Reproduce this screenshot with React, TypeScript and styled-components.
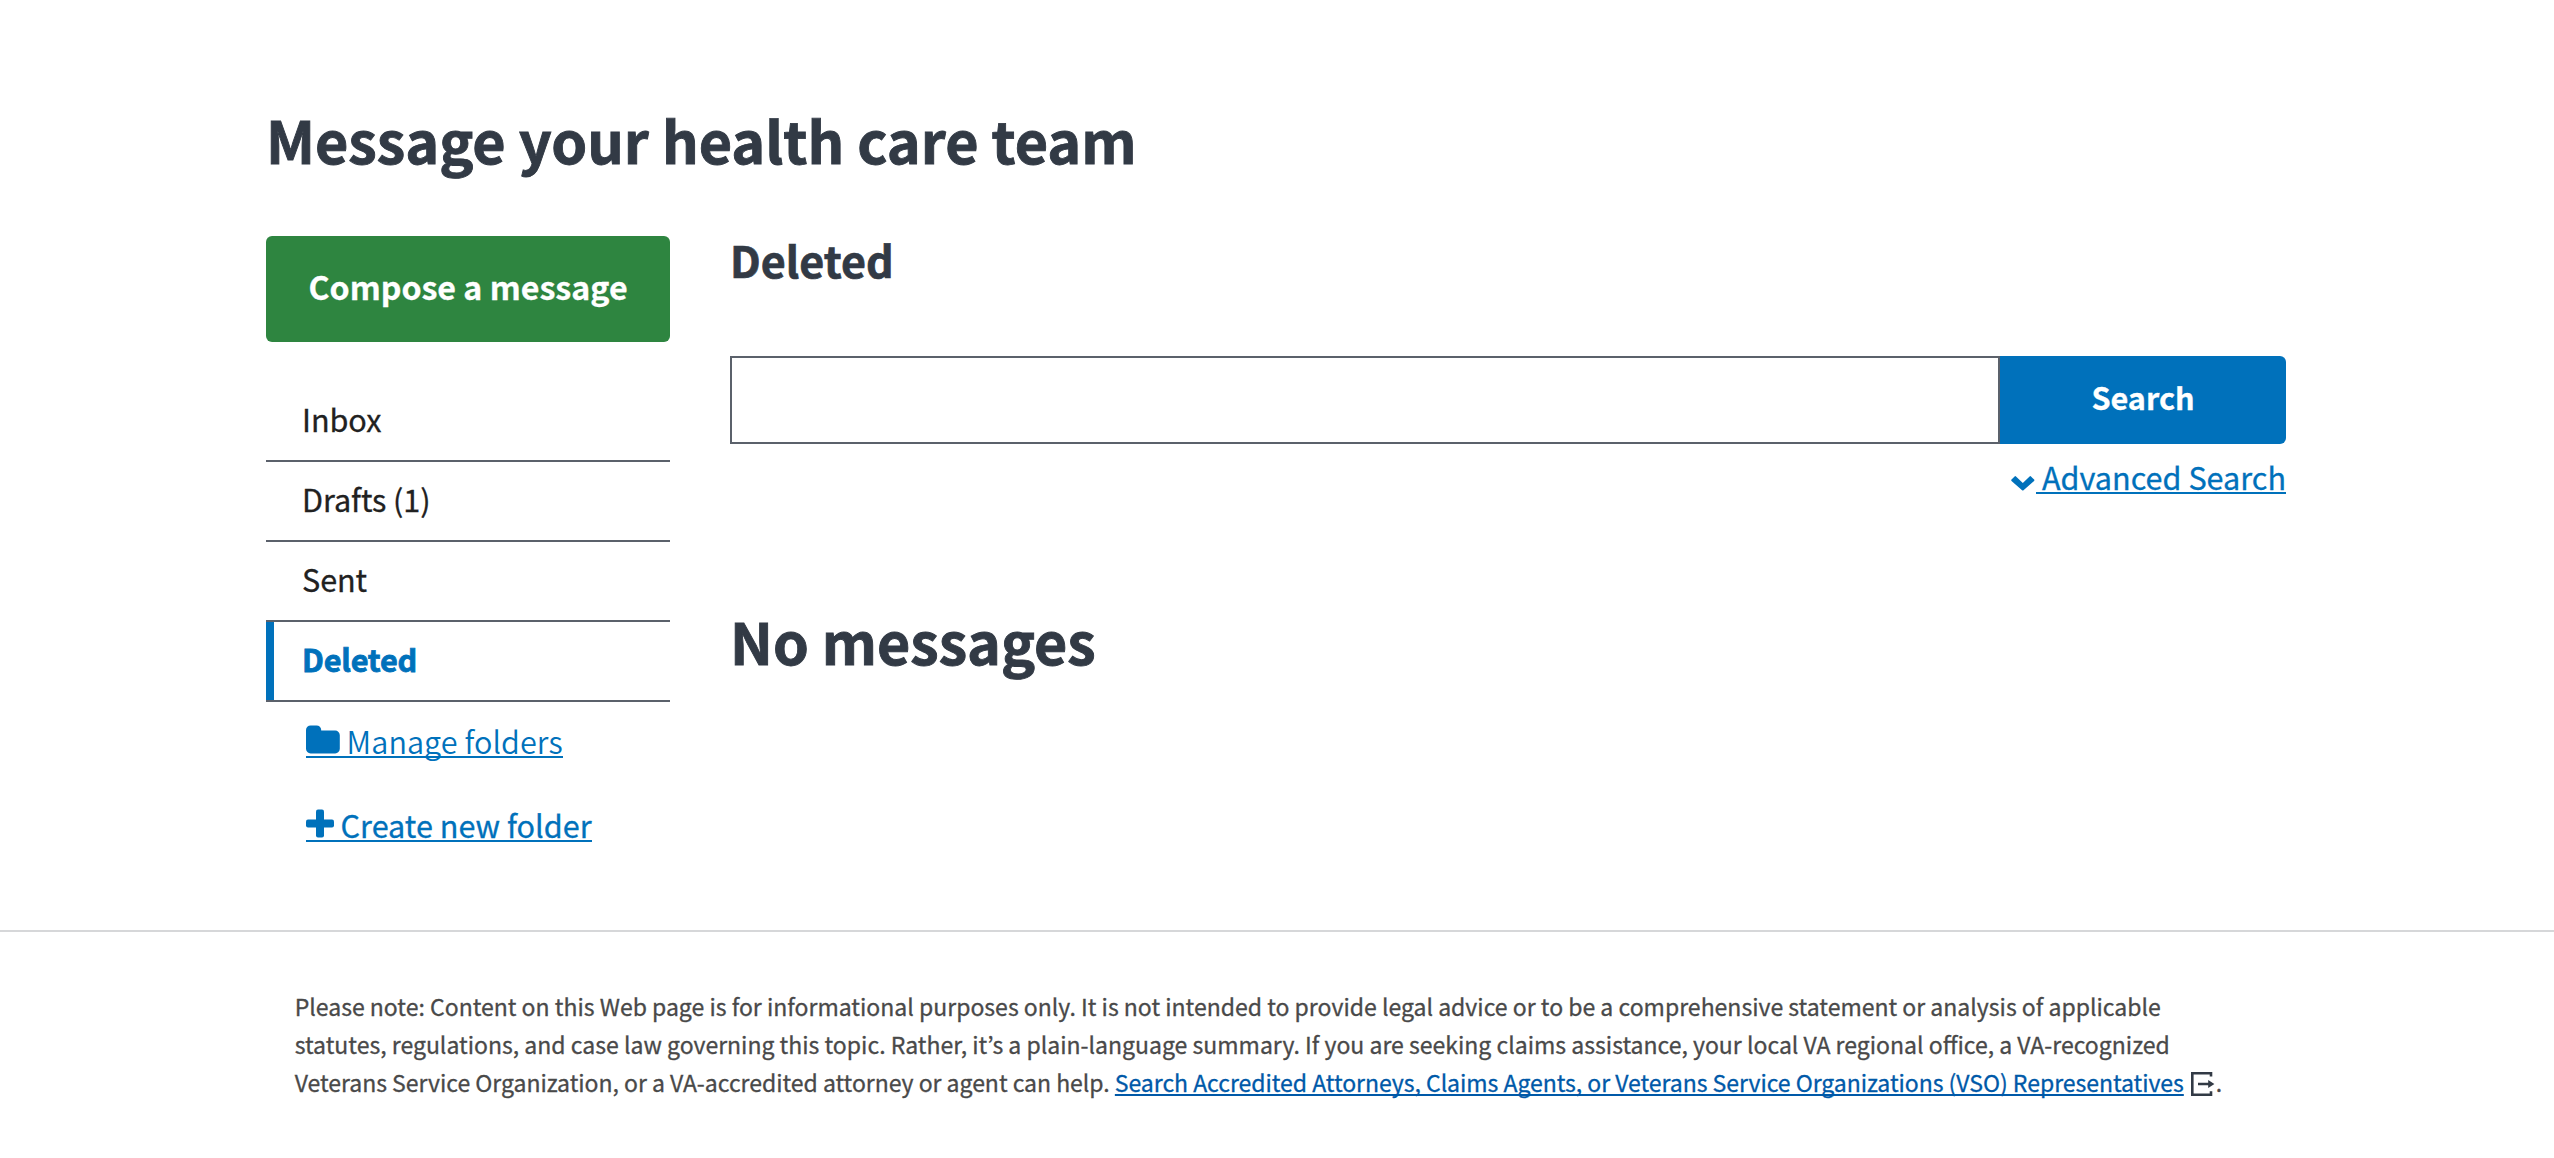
import React from "react";
import styled, { createGlobalStyle } from "styled-components";

const blue = "#0071bb";
const ink = "#323a45";
const rule = "#5b616b";

const Global = createGlobalStyle`
  *, *::before, *::after { box-sizing: border-box; }
  body {
    margin: 0;
    background: #fff;
    color: #212121;
    font-family: "Noto Sans CJK KR", "Noto Sans", sans-serif;
    font-size: 30.6px;
    overflow: hidden;
    -webkit-text-stroke: 0.3px currentColor;
  }
  h1, h2, ul, p { margin: 0; padding: 0; }
  a { color: ${blue}; text-decoration: none; }
`;

const Page = styled.div`
  display: flex;
  flex-direction: column;
  height: 1158px;
`;

const Content = styled.main`
  display: flex;
  flex-direction: column;
  gap: 57px;
  height: 930px;
  padding: 99px 268px 0 266px;
`;

const Title = styled.h1`
  color: ${ink};
  font-size: 57.45px;
  font-weight: 700;
  line-height: 80px;
  -webkit-text-stroke-width: 0.9px;
`;

const Columns = styled.div`
  display: flex;
  gap: 60px;
`;

const Sidebar = styled.aside`
  display: flex;
  flex-direction: column;
  width: 404px;
`;

const Panel = styled.section`
  display: flex;
  flex-direction: column;
  flex: 1;
`;

const Button = styled.button`
  border: 0;
  padding: 0 0 6px;
  color: #fff;
  font-family: inherit;
  font-weight: 700;
`;

const ComposeButton = styled(Button)`
  height: 106px;
  border-radius: 6px;
  background: #2e8540;
  font-size: 32.2px;
`;

const FolderList = styled.ul`
  margin-top: 40px;
  list-style: none;
`;

const FolderItem = styled.li<{ $active?: boolean }>`
  border-bottom: 2px solid ${rule};

  a {
    display: flex;
    align-items: center;
    height: 78px;
    padding: 0 0 5px ${(p) => (p.$active ? 28 : 36)}px;
    border-left: ${(p) => (p.$active ? `8px solid ${blue}` : "0")};
    color: ${(p) => (p.$active ? blue : "#212121")};
    font-weight: ${(p) => (p.$active ? 700 : 400)};
    letter-spacing: ${(p) => (p.$active ? "-0.2px" : "-0.08px")};
    -webkit-text-stroke-width: ${(p) => (p.$active ? 0.8 : 0.3)}px;
  }
`;

const FolderActions = styled.div`
  display: flex;
  flex-direction: column;
  align-items: flex-start;
  gap: 51px;
  padding: 23px 0 0 40px;
`;

const ActionLink = styled.a<{ $light?: boolean; $gap: number }>`
  display: flex;
  align-items: flex-end;
  gap: ${(p) => p.$gap}px;
  height: 33px;
  border-bottom: 2px solid ${blue};
  font-weight: ${(p) => (p.$light ? 350 : 400)};
  letter-spacing: ${(p) => (p.$light ? "0.07px" : "0")};
  -webkit-text-stroke-width: ${(p) => (p.$light ? 0 : 0.3)}px;
  line-height: 29px;
  white-space: nowrap;

  svg { margin-bottom: 2px; }
`;

const FolderTitle = styled.h2`
  color: ${ink};
  font-size: 43px;
  font-weight: 700;
  line-height: 46px;
  -webkit-text-stroke-width: 0.7px;
`;

const SearchBar = styled.form`
  display: flex;
  height: 88px;
  margin-top: 74px;
`;

const SearchInput = styled.input`
  flex: 1;
  border: 2px solid ${rule};
  border-radius: 0;
  padding: 0 20px;
  outline: 0;
  font: inherit;
`;

const SearchButton = styled(Button)`
  width: 286px;
  border-radius: 0 6px 6px 0;
  background: ${blue};
  font-size: 30.6px;
`;

const AdvancedLink = styled.a`
  display: flex;
  align-items: flex-end;
  align-self: flex-end;
  gap: 1px;
  margin-top: 17px;

  svg { margin-bottom: 3px; }
`;

const AdvancedLabel = styled.span`
  height: 33px;
  padding-left: 6px;
  border-bottom: 2px solid ${blue};
  line-height: 33px;
`;

const EmptyState = styled(Title)`
  margin-top: 107px;
  font-size: 57.3px;
`;

const Footer = styled.footer`
  padding: 55px 294px 0 294.7px;
  border-top: 2px solid #d6d7d9;
`;

const Disclaimer = styled.p`
  color: #494949;
  font-size: 23.02px;
  line-height: 38px;
  white-space: nowrap;
`;

const Tracked = styled.span<{ $ls: number }>`
  letter-spacing: ${(p) => p.$ls}px;
`;

const FooterLink = styled.a`
  color: #0059a8;
  letter-spacing: -0.04px;
  text-decoration: underline;
  text-decoration-thickness: 2px;
  text-decoration-skip-ink: none;
  text-underline-offset: 2px;
`;

const ExitMark = styled.svg`
  margin: 0 1px 0 7px;
  vertical-align: -4px;
`;

const FolderIcon = () => (
  <svg width="34" height="29" viewBox="0 0 34 29" fill={blue}>
    <path d="M0 5a4.6 4.6 0 0 1 4.6-4.6h6a4.6 4.6 0 0 1 4.6 4.6v.6h14a4.6 4.6 0 0 1 4.6 4.6v13.6a4.6 4.6 0 0 1-4.6 4.6H4.6A4.6 4.6 0 0 1 0 23.8z" />
  </svg>
);

const PlusIcon = () => (
  <svg width="28" height="29" viewBox="0 0 28 29" fill={blue}>
    <rect x="10" y="0.6" width="8" height="28" rx="2" />
    <rect x="0" y="10.6" width="28" height="8" rx="2" />
  </svg>
);

const ChevronIcon = () => (
  <svg width="24" height="16" viewBox="0 0 24 16" fill={blue}>
    <path d="M.5 4.6 3.6 1.4q.7-.7 1.4 0L11.8 8l6.8-6.6q.7-.7 1.4 0l3.1 3.2q.6.7 0 1.3L12.5 15.3q-.7.6-1.4 0L.5 5.9q-.6-.7 0-1.3z" />
  </svg>
);

const ExitIcon = () => (
  <ExitMark width="24" height="24" viewBox="0 0 24 24" fill="none" stroke={ink} strokeWidth="2.6">
    <path d="M20 4.6V1.3H1.3v21.4H20v-3.4M7 12h11" />
    <path d="M17.2 8 23.4 12l-6.2 4z" fill={ink} stroke="none" />
  </ExitMark>
);

const folders = [
  { name: "Inbox" },
  { name: "Drafts (1)" },
  { name: "Sent" },
  { name: "Deleted", active: true },
];

export default function App() {
  return (
    <Page>
      <Global />
      <Content>
        <Title>Message your health care team</Title>
        <Columns>
          <Sidebar>
            <ComposeButton type="button">Compose a message</ComposeButton>
            <FolderList>
              {folders.map((f) => (
                <FolderItem key={f.name} $active={f.active}>
                  <a href="#">{f.name}</a>
                </FolderItem>
              ))}
            </FolderList>
            <FolderActions>
              <ActionLink href="#" $gap={6.6} $light>
                <FolderIcon />
                Manage folders
              </ActionLink>
              <ActionLink href="#" $gap={6.6}>
                <PlusIcon />
                Create new folder
              </ActionLink>
            </FolderActions>
          </Sidebar>
          <Panel>
            <FolderTitle>Deleted</FolderTitle>
            <SearchBar>
              <SearchInput type="text" aria-label="Search messages" />
              <SearchButton type="button">Search</SearchButton>
            </SearchBar>
            <AdvancedLink href="#">
              <ChevronIcon />
              <AdvancedLabel>Advanced Search</AdvancedLabel>
            </AdvancedLink>
            <EmptyState as="h2">No messages</EmptyState>
          </Panel>
        </Columns>
      </Content>
      <Footer>
        <Disclaimer>
          Please note: Content on this Web page is for informational purposes only. It is not intended to provide legal
          advice or to be a comprehensive statement or analysis of applicable
          <br />
          statutes, regulations, and case law governing this topic. Rather, it’s a plain-language summary. If you are
          seeking claims assistance, your local VA regional office, a VA-recognized
          <br />
          <Tracked $ls={-0.03}>
            Veterans Service Organization, or a VA-accredited attorney or agent can help.{" "}
          </Tracked>
          <FooterLink href="#">
            Search Accredited Attorneys, Claims Agents, or Veterans Service Organizations (VSO) Representatives
          </FooterLink>
          <ExitIcon />.
        </Disclaimer>
      </Footer>
    </Page>
  );
}
